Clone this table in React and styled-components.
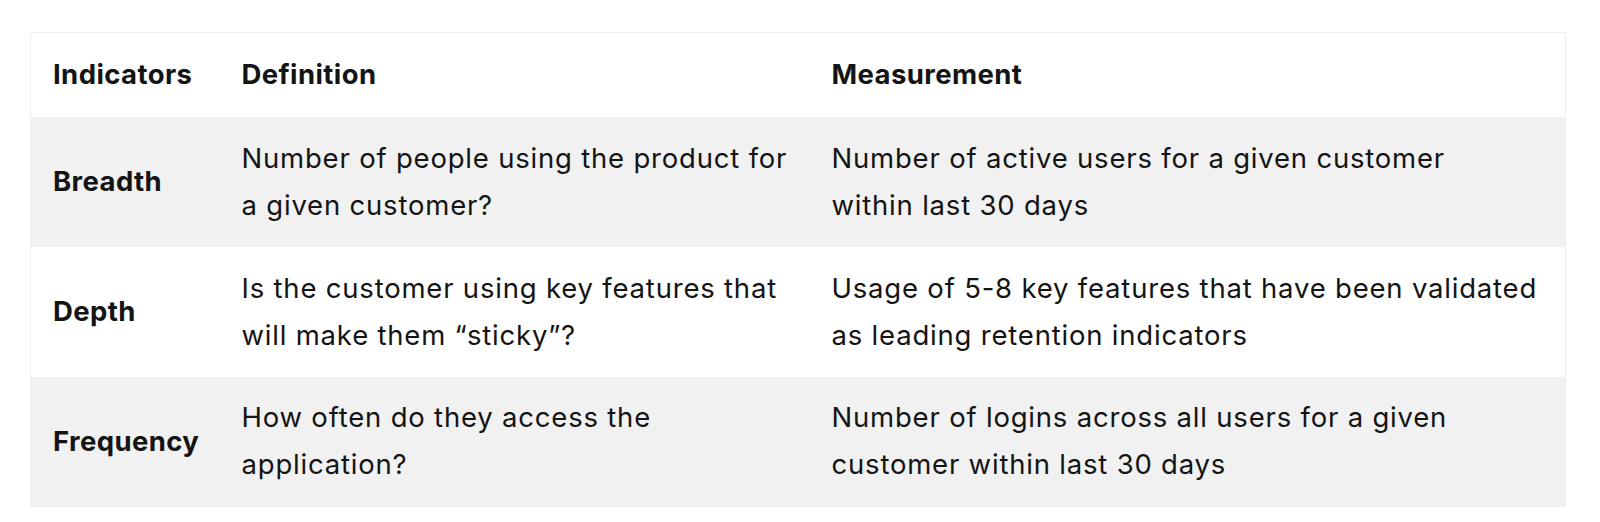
import styled, { createGlobalStyle } from "styled-components";

const GlobalStyle = createGlobalStyle`
    body {
        margin: 0;
        background: #ffffff;
        font-family: Inter, "Liberation Sans", sans-serif;
        color: #141414;
    }
`

const rows = [
    {
        name: "Breadth",
        definition: ["Number of people using the product for", "a given customer?"],
        measurement: ["Number of active users for a given customer", "within last 30 days"],
    },
    {
        name: "Depth",
        definition: ["Is the customer using key features that", "will make them \u201csticky\u201d?"],
        measurement: ["Usage of 5-8 key features that have been validated", "as leading retention indicators"],
    },
    {
        name: "Frequency",
        definition: ["How often do they access the", "application?"],
        measurement: ["Number of logins across all users for a given", "customer within last 30 days"],
    },
];

// keeps the line breaks of the original copy
const Lines = ({lines}) => (
    <>
        {lines.map((line, i) => (
            <Line key={i}>{line}</Line>
        ))}
    </>
);

const App = () => {
    return (
        <Page>
            <GlobalStyle />
            <Table>
                <colgroup>
                    <col style={{width: 189}} />
                    <col style={{width: 590}} />
                    <col />
                </colgroup>
                <thead>
                    <HeadRow>
                        <HeadCell>Indicators</HeadCell>
                        <HeadCell>Definition</HeadCell>
                        <HeadCell>Measurement</HeadCell>
                    </HeadRow>
                </thead>
                <tbody>
                    {rows.map((row, i) => (
                        <Row key={row.name} $shaded={i % 2 === 0}>
                            <NameCell>{row.name}</NameCell>
                            <Cell><Lines lines={row.definition} /></Cell>
                            <Cell><Lines lines={row.measurement} /></Cell>
                        </Row>
                    ))}
                </tbody>
            </Table>
        </Page>
    )
}

const Page = styled.div`
    padding: 32px 34px 15px 30px;
`

const Table = styled.table`
    width: 1536px;
    table-layout: fixed;
    border-collapse: collapse;
    border: 1px solid #efefef;
    font-size: 27.5px;
    line-height: 47px;
`

const HeadRow = styled.tr`
    height: 84px;
    background: #ffffff;
`

const HeadCell = styled.th`
    padding: 0 22px;
    text-align: left;
    font-weight: 700;
    letter-spacing: 0.4px;
    vertical-align: middle;
`

const Row = styled.tr`
    height: 130px;
    background: ${props => props.$shaded ? "#f1f1f1" : "#ffffff"};
`

const Cell = styled.td`
    padding: 0 22px;
    vertical-align: middle;
    font-weight: 400;
    letter-spacing: 0.8px;
`

const NameCell = styled(Cell)`
    font-weight: 700;
    letter-spacing: 0.4px;
`

const Line = styled.span`
    display: block;
    white-space: nowrap;
`

export default App;
